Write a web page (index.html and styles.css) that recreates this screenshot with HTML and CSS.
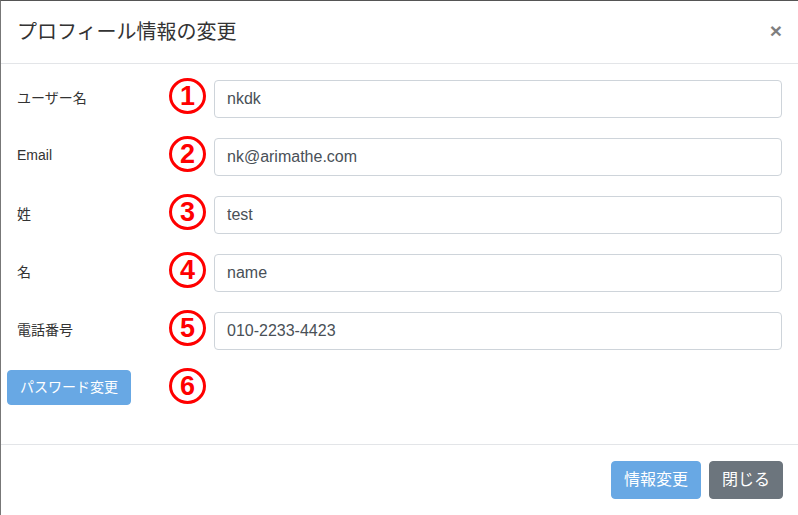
FILE: index.html
```html
<!DOCTYPE html>
<html lang="ja">
<head>
    <meta charset="UTF-8">
    <title>プロフィール情報の変更</title>
    <link rel="stylesheet" href="styles.css">
</head>
<body>
    <div class="modal">
        <div class="modal-header">
            <h5 class="modal-title">プロフィール情報の変更</h5>
            <span class="close">&times;</span>
        </div>
        <div class="modal-body">
            <div class="row">
                <label class="label">ユーザー名</label>
                <span class="mark">1</span>
                <input class="input" type="text" value="nkdk">
            </div>
            <div class="row">
                <label class="label">Email</label>
                <span class="mark">2</span>
                <input class="input" type="text" value="nk@arimathe.com">
            </div>
            <div class="row">
                <label class="label">姓</label>
                <span class="mark">3</span>
                <input class="input" type="text" value="test">
            </div>
            <div class="row">
                <label class="label">名</label>
                <span class="mark">4</span>
                <input class="input" type="text" value="name">
            </div>
            <div class="row">
                <label class="label">電話番号</label>
                <span class="mark">5</span>
                <input class="input" type="text" value="010-2233-4423">
            </div>
            <div class="row row-top">
                <div class="label">
                    <button class="btn btn-primary btn-pw">パスワード変更</button>
                </div>
                <span class="mark">6</span>
            </div>
        </div>
        <div class="modal-footer">
            <button class="btn btn-primary">情報変更</button>
            <button class="btn btn-secondary">閉じる</button>
        </div>
    </div>
</body>
</html>
```

FILE: styles.css
```css
* {
    box-sizing: border-box;
}
body {
    margin: 0;
    padding: 0;
    background: #fff;
    font-family: "Liberation Sans", "Noto Sans CJK JP", sans-serif;
    color: #212529;
}
.modal {
    width: 798px;
    height: 515px;
    border-top: 1px solid #555;
    border-left: 1px solid #777;
    background: #fff;
    overflow: hidden;
}
.modal-header {
    display: flex;
    justify-content: space-between;
    align-items: center;
    padding: 16px 16px 16px 16px;
    border-bottom: 1px solid #e3e5e8;
}
.modal-title {
    margin: 0;
    font-size: 20px;
    font-weight: 400;
    line-height: 30px;
    color: #333;
}
.close {
    font-size: 21px;
    font-weight: 700;
    line-height: 1;
    color: #000;
    opacity: .5;
    margin-top: -4px;
}
.modal-body {
    padding: 16px 16px 16px 16px;
}
.row {
    display: flex;
    align-items: center;
    height: 38px;
    margin-bottom: 20px;
}
.row-top {
    align-items: flex-start;
}
.label {
    width: 152px;
    flex-shrink: 0;
    font-size: 14px;
    color: #333;
    margin-top: -5px;
}
.row-top .label {
    margin-top: 0;
}
.mark {
    width: 37px;
    height: 36px;
    flex-shrink: 0;
    align-self: flex-start;
    margin-top: -2px;
    margin-right: 8px;
    border: 3.5px solid #f00;
    border-radius: 50%;
    display: flex;
    align-items: center;
    justify-content: center;
    color: #f00;
    font-weight: 700;
    font-size: 27px;
    line-height: 1;
}
.input {
    flex: 1;
    height: 38px;
    padding: 6px 12px;
    font-family: "Liberation Sans", "Noto Sans CJK JP", sans-serif;
    font-size: 16px;
    color: #495057;
    border: 1px solid #ced4da;
    border-radius: 4px;
    background: #fff;
}
.btn {
    font-family: "Liberation Sans", "Noto Sans CJK JP", sans-serif;
    font-size: 16px;
    line-height: 24px;
    padding: 6px 12px;
    border: 1px solid transparent;
    border-radius: 4px;
    color: #fff;
}
.btn-primary {
    background: #68a8e4;
    border-color: #68a8e4;
}
.btn-secondary {
    background: #6c757d;
    border-color: #6c757d;
}
.btn-pw {
    margin-left: -10px;
    font-size: 14px;
    line-height: 21px;
    padding: 6px 12px;
}
.modal-footer {
    display: flex;
    justify-content: flex-end;
    gap: 8px;
    padding: 16px 15px 16px 16px;
    border-top: 1px solid #e3e5e8;
}
```
